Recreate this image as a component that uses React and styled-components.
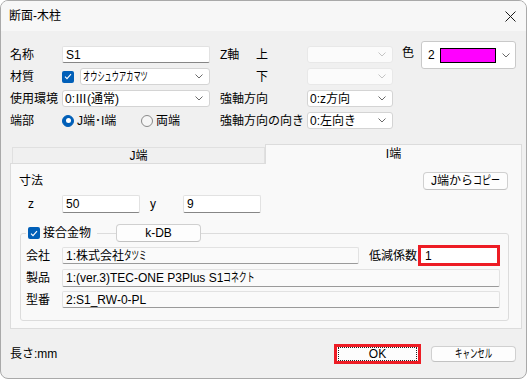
import React from "react";
import styled, { createGlobalStyle } from "styled-components";

const FONT = `"Liberation Sans", "Noto Sans CJK JP", sans-serif`;

const Global = createGlobalStyle`
  html, body { margin: 0; padding: 0; background: #ffffff; }
  body { font-family: ${FONT}; font-size: 12px; color: #000; }
  * { box-sizing: border-box; }
`;

const Window = styled.div`
  width: 527px;
  height: 379px;
  border: 1px solid #a9a9a9;
  border-radius: 8px;
  overflow: hidden;
  background: #f0f0f0;
  display: flex;
  flex-direction: column;
`;

const TitleBar = styled.div`
  height: 30px;
  flex: none;
  background: #f7f7f7;
  display: flex;
  align-items: center;
  justify-content: space-between;
  padding: 0 10px 0 8px;
  font-size: 12px;
  line-height: 1;
`;

const CloseBtn = styled.div`
  width: 12px;
  height: 12px;
  display: flex;
  align-items: center;
  justify-content: center;
`;

const Body = styled.div`
  flex: 1;
  display: flex;
  flex-direction: column;
  padding: 15px 4px 0 9px;
`;

const TopArea = styled.div`
  display: flex;
  align-items: flex-start;
`;

const FormGrid = styled.div`
  display: grid;
  grid-template-columns: ${(p) => p.$cols};
  grid-auto-rows: 17px;
  row-gap: 5px;
  align-items: stretch;
  margin-left: ${(p) => p.$ml || 0}px;
`;

const Label = styled.div`
  display: flex;
  align-items: center;
  white-space: nowrap;
  line-height: 1;
  padding-left: ${(p) => p.$pl || 0}px;
`;

const SubLabel = styled.span`
  display: inline-block;
  width: ${(p) => p.$w}px;
`;

const Cell = styled.div`
  display: flex;
  align-items: center;
  gap: ${(p) => p.$gap || 0}px;
  min-width: 0;
`;

/* half-width katakana look: full-width kana drawn condensed */
const Narrow = styled.span`
  display: inline-block;
  transform: scaleX(${(p) => p.$scale || 0.62});
  transform-origin: left center;
  margin-right: ${(p) => -(p.$chars * 12 * (1 - (p.$scale || 0.62)))}px;
  white-space: nowrap;
`;

const Cjk = styled.span`
  font-family: "Noto Sans CJK JP", sans-serif;
`;

const TextInput = styled.div`
  height: ${(p) => (p.$h ? p.$h + "px" : "100%")};
  width: ${(p) => (p.$w ? p.$w + "px" : "auto")};
  flex: ${(p) => (p.$w ? "none" : 1)};
  background: ${(p) => (p.$readonly ? "#fafafa" : "#ffffff")};
  border: 1px solid #e2e2e2;
  border-bottom-color: ${(p) => (p.$readonly ? "#9a9a9a" : "#868686")};
  border-radius: 2px;
  display: flex;
  align-items: center;
  padding: 0 3px;
  line-height: 1;
  white-space: nowrap;
  overflow: hidden;
`;

const SelectBox = styled.div`
  height: 100%;
  width: ${(p) => (p.$w ? p.$w + "px" : "100%")};
  flex: none;
  background: ${(p) => (p.$disabled ? "#fbfbfb" : "#ffffff")};
  border: 1px solid ${(p) => (p.$disabled ? "#e8e8e8" : "#d4d4d4")};
  border-radius: 3px;
  display: flex;
  align-items: center;
  justify-content: space-between;
  padding: 0 6px 0 2px;
  line-height: 1;
  white-space: nowrap;
`;

const Chevron = ({ light }) => (
  <svg width="8" height="5" viewBox="0 0 8 5">
    <path d="M0.5 0.5 L4 4 L7.5 0.5" fill="none" stroke={light ? "#c4c4c4" : "#6a6a6a"} strokeWidth="1" />
  </svg>
);

const Select = ({ children, disabled, w }) => (
  <SelectBox $disabled={disabled} $w={w}>
    <span>{children}</span>
    <Chevron light={disabled} />
  </SelectBox>
);

const CheckBoxBox = styled.span`
  width: 12px;
  height: 12px;
  flex: none;
  border-radius: 2px;
  background: #005fb8;
  display: inline-flex;
  align-items: center;
  justify-content: center;
`;

const CheckBox = () => (
  <CheckBoxBox>
    <svg width="8" height="7" viewBox="0 0 8 7">
      <path d="M1 3.6 L3 5.6 L7 1.2" fill="none" stroke="#fff" strokeWidth="1.1" />
    </svg>
  </CheckBoxBox>
);

const RadioDot = styled.span`
  width: 12px;
  height: 12px;
  flex: none;
  border-radius: 50%;
  background: ${(p) => (p.$on ? "#005fb8" : "#f6f6f6")};
  border: 1px solid ${(p) => (p.$on ? "#005fb8" : "#8a8a8a")};
  display: inline-flex;
  align-items: center;
  justify-content: center;
  &::after {
    content: "";
    display: ${(p) => (p.$on ? "block" : "none")};
    width: 5px;
    height: 5px;
    border-radius: 50%;
    background: #fff;
  }
`;

const RadioItem = styled.span`
  display: inline-flex;
  align-items: center;
  gap: 3px;
  width: ${(p) => p.$w}px;
  line-height: 1;
  white-space: nowrap;
`;

const ColorArea = styled.div`
  margin-left: 9px;
  margin-top: -5px;
  display: flex;
  align-items: flex-start;
  gap: 7px;
`;

const ColorLabel = styled.div`
  margin-top: 6px;
  line-height: 1;
`;

const ColorSelect = styled.div`
  width: 95px;
  height: 28px;
  background: #fff;
  border: 1px solid #c9c9c9;
  border-radius: 3px;
  display: flex;
  align-items: center;
  padding: 0 5px 0 6px;
  line-height: 1;
`;

const Swatch = styled.span`
  width: 56px;
  height: 15px;
  margin-left: 5px;
  flex: none;
  background: ${(p) => p.$color};
  border: 1px solid #000;
`;

const SwatchChevron = styled.span`
  margin-left: auto;
  display: flex;
`;

const Tabs = styled.div`
  margin-top: 15px;
  display: flex;
  flex-direction: column;
`;

const TabStrip = styled.div`
  height: 19px;
  display: flex;
  align-items: flex-end;
  padding-left: 2px;
`;

const Tab = styled.div`
  width: ${(p) => p.$w}px;
  height: ${(p) => (p.$active ? 20 : 16)}px;
  background: ${(p) => (p.$active ? "#f9f9f9" : "#f0f0f0")};
  border: 1px solid ${(p) => (p.$active ? "#dcdcdc" : "#e0e0e0")};
  border-bottom: none;
  margin-bottom: ${(p) => (p.$active ? -1 : 0)}px;
  position: relative;
  z-index: ${(p) => (p.$active ? 1 : 0)};
  display: flex;
  align-items: center;
  justify-content: center;
  line-height: 1;
  padding-bottom: ${(p) => (p.$active ? 2 : 0)}px;
`;

const Panel = styled.div`
  background: #f9f9f9;
  border: 1px solid #dcdcdc;
  padding: 8px 12px 7px 8px;
  display: flex;
  flex-direction: column;
`;

const PanelHead = styled.div`
  height: 18px;
  display: flex;
  align-items: center;
  justify-content: space-between;
  line-height: 1;
`;

const Button = styled.div`
  width: ${(p) => p.$w}px;
  height: ${(p) => p.$h}px;
  flex: none;
  background: #fdfdfd;
  border: 1px solid #d0d0d0;
  border-bottom-color: #c2c2c2;
  border-radius: 4px;
  display: flex;
  align-items: center;
  justify-content: center;
  line-height: 1;
  white-space: nowrap;
  margin-left: ${(p) => p.$ml || 0}px;
  margin-right: ${(p) => p.$mr || 0}px;
`;

const SizeRow = styled.div`
  margin-top: 5px;
  height: 18px;
  display: grid;
  grid-template-columns: 43px 78px 43px 78px;
`;

const GroupBox = styled.div`
  margin: 20px 0 0 1px;
  border: 1px solid #dcdcdc;
  border-radius: 3px;
  padding: 0 8px 10px 5px;
  display: flex;
  flex-direction: column;
`;

const GroupHead = styled.div`
  margin-top: -10px;
  height: 18px;
  display: flex;
  align-items: center;
`;

const GroupCheck = styled.span`
  display: inline-flex;
  align-items: center;
  gap: 3px;
  height: 100%;
  padding: 0 6px 0 2px;
  background: #f9f9f9;
  line-height: 1;
`;

const GroupRows = styled.div`
  margin-top: 3px;
  display: grid;
  grid-auto-rows: 21px;
  row-gap: 1px;
`;

const GroupRow = styled.div`
  display: flex;
  align-items: center;
`;

const RowLabel = styled.span`
  width: ${(p) => p.$w}px;
  margin-left: ${(p) => p.$ml || 0}px;
  flex: none;
  line-height: 1;
  white-space: nowrap;
`;

const Highlight = styled.div`
  flex: 1;
  height: 21px;
  margin-left: 1px;
  border: 3px solid #ed1c24;
  display: flex;
`;

const HighlightInput = styled.div`
  flex: 1;
  background: #fff;
  display: flex;
  align-items: center;
  padding: 0 4px;
  line-height: 1;
`;

const Footer = styled.div`
  flex: 1;
  display: flex;
  align-items: center;
  padding: 0 6px 0 0;
  line-height: 1;
`;

const FooterButtons = styled.div`
  margin-left: auto;
  display: flex;
  align-items: center;
  gap: 10px;
`;

const OkFrame = styled.div`
  width: 87px;
  height: 20px;
  border: 3px solid #ed1c24;
  background: #fdfdfd;
  display: flex;
`;

const OkFocus = styled.div`
  flex: 1;
  margin: 0 1px;
  border: 1px dotted #222;
  display: flex;
  align-items: center;
  justify-content: center;
  line-height: 1;
`;

export default function App() {
  return (
    <>
      <Global />
      <Window>
        <TitleBar>
          <span>断面-木柱</span>
          <CloseBtn>
            <svg width="11" height="11" viewBox="0 0 11 11">
              <path d="M0.5 0.5 L10.5 10.5 M10.5 0.5 L0.5 10.5" stroke="#1a1a1a" strokeWidth="1" />
            </svg>
          </CloseBtn>
        </TitleBar>
        <Body>
          <TopArea>
            <FormGrid $cols="52px 148px">
              <Label>名称</Label>
              <Cell>
                <TextInput>S1</TextInput>
              </Cell>
              <Label>材質</Label>
              <Cell $gap={6}>
                <CheckBox />
                <Select w={130}>
                  <Narrow $chars={9} $scale={0.6}>オウシュウアカマツ</Narrow>
                </Select>
              </Cell>
              <Label>使用環境</Label>
              <Cell>
                <Select>
                  0:<Cjk>Ⅲ</Cjk>(通常)
                </Select>
              </Cell>
              <Label>端部</Label>
              <Cell>
                <RadioItem $w={79}>
                  <RadioDot $on />
                  J端･I端
                </RadioItem>
                <RadioItem $w={60}>
                  <RadioDot />
                  両端
                </RadioItem>
              </Cell>
            </FormGrid>
            <FormGrid $cols="87px 86px" $ml={10}>
              <Label>
                <SubLabel $w={36}>Z軸</SubLabel>上
              </Label>
              <Cell>
                <Select disabled />
              </Cell>
              <Label $pl={36}>下</Label>
              <Cell>
                <Select disabled />
              </Cell>
              <Label>強軸方向</Label>
              <Cell>
                <Select>0:z方向</Select>
              </Cell>
              <Label>強軸方向の向き</Label>
              <Cell>
                <Select>0:左向き</Select>
              </Cell>
            </FormGrid>
            <ColorArea>
              <ColorLabel>色</ColorLabel>
              <ColorSelect>
                <span>2</span>
                <Swatch $color="#ff00ff" />
                <SwatchChevron>
                  <Chevron />
                </SwatchChevron>
              </ColorSelect>
            </ColorArea>
          </TopArea>

          <Tabs>
            <TabStrip>
              <Tab $w={253}>J端</Tab>
              <Tab $w={257} $active>
                I端
              </Tab>
            </TabStrip>
            <Panel>
              <PanelHead>
                <span>寸法</span>
                <Button $w={85} $h={18} $mr={1}>
                  J端から<Narrow $chars={3} $scale={0.75}>コピー</Narrow>
                </Button>
              </PanelHead>
              <SizeRow>
                <Label $pl={9}>z</Label>
                <TextInput>50</TextInput>
                <Label $pl={10}>y</Label>
                <TextInput>9</TextInput>
              </SizeRow>
              <GroupBox>
                <GroupHead>
                  <GroupCheck>
                    <CheckBox />
                    接合金物
                  </GroupCheck>
                  <Button $w={85} $h={18} $ml={19}>
                    k-DB
                  </Button>
                </GroupHead>
                <GroupRows>
                  <GroupRow>
                    <RowLabel $w={36}>会社</RowLabel>
                    <TextInput $readonly $w={297} $h={17}>
                      1:株式会社<Narrow $chars={3} $scale={0.63}>タツミ</Narrow>
                    </TextInput>
                    <RowLabel $w={48} $ml={10}>
                      低減係数
                    </RowLabel>
                    <Highlight>
                      <HighlightInput>1</HighlightInput>
                    </Highlight>
                  </GroupRow>
                  <GroupRow>
                    <RowLabel $w={36}>製品</RowLabel>
                    <TextInput $readonly $h={18}>
                      1:(ver.3)TEC-ONE P3Plus S1<Narrow $chars={4} $scale={0.66}>コネクト</Narrow>
                    </TextInput>
                  </GroupRow>
                  <GroupRow>
                    <RowLabel $w={36}>型番</RowLabel>
                    <TextInput $readonly $h={17}>
                      2:S1_RW-0-PL
                    </TextInput>
                  </GroupRow>
                </GroupRows>
              </GroupBox>
            </Panel>
          </Tabs>

          <Footer>
            <span>長さ:mm</span>
            <FooterButtons>
              <OkFrame>
                <OkFocus>OK</OkFocus>
              </OkFrame>
              <Button $w={85} $h={16}>
                <Narrow $chars={5} $scale={0.62}>キャンセル</Narrow>
              </Button>
            </FooterButtons>
          </Footer>
        </Body>
      </Window>
    </>
  );
}
